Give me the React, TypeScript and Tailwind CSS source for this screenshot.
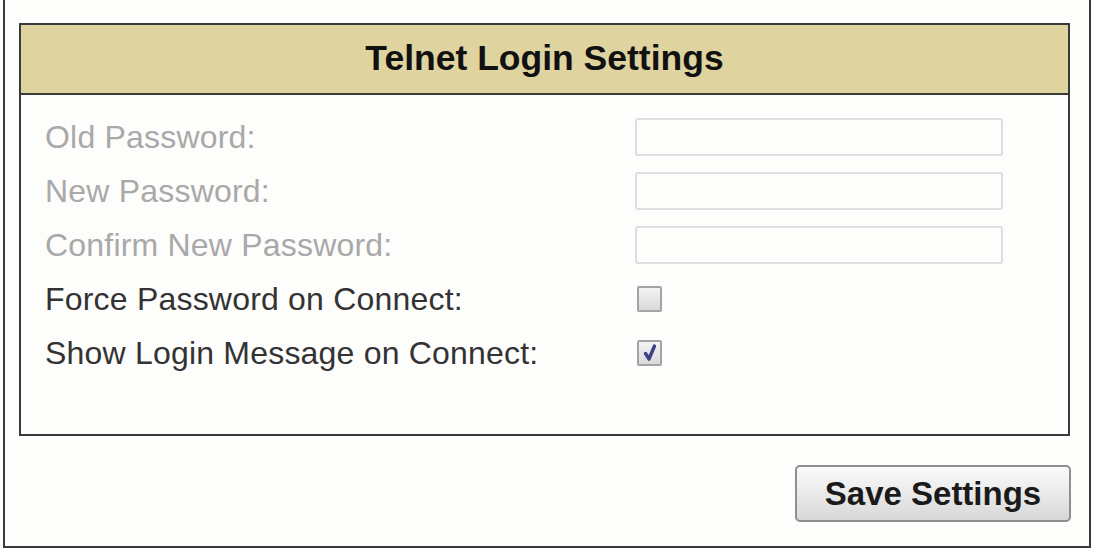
const font = { fontFamily: '"Liberation Sans", Arial, sans-serif' };

function TextRow({ label }: { label: string }) {
  return (
    <div className="flex items-center h-[38px]">
      <span className="w-[590px] text-[32px] tracking-[0.2px] text-[#a9a9a9] leading-none">{label}</span>
      <input
        type="text"
        disabled
        className="w-[368px] h-[38px] border-2 border-[#dedede] rounded-[3px] bg-[#fdfdfc]"
      />
    </div>
  );
}

function CheckRow({ label, checked }: { label: string; checked: boolean }) {
  return (
    <div className="flex items-center h-[38px]">
      <span className="w-[592px] text-[32px] tracking-[0.2px] text-[#333333] leading-none">{label}</span>
      <span className="w-[25px] h-[26px] border-2 border-[#a3a3a3] rounded-[2px] bg-gradient-to-b from-[#f4f4f4] to-[#d9d9d9] flex items-center justify-center">
        {checked && (
          <svg viewBox="0 0 20 20" className="w-[20px] h-[20px]">
            <path d="M5.5 10.5 L9 16 L14.5 3" fill="none" stroke="#40408a" strokeWidth="3.4" strokeLinecap="round" strokeLinejoin="round" />
          </svg>
        )}
      </span>
    </div>
  );
}

export default function App() {
  return (
    <div className="w-[1093px] h-[548px] bg-[#fdfdfb] overflow-hidden" style={font}>
      <div className="ml-[3px] w-[1088px] h-[548px] border-x-2 border-b-2 border-[#3a3a3a] pl-[14px] pr-[19px] pt-[23px] flex flex-col">
        <div className="border-2 border-[#3a3a3a] bg-[#fdfdfb]">
          <div className="h-[70px] bg-[#dfd3a0] border-b-2 border-[#3a3a3a] flex items-center justify-center">
            <span className="text-[35.5px] font-bold text-[#111111] leading-none">Telnet Login Settings</span>
          </div>
          <div className="pl-[24px] pt-[23px] pb-[62px] flex flex-col gap-[16px]">
            <TextRow label="Old Password:" />
            <TextRow label="New Password:" />
            <TextRow label="Confirm New Password:" />
            <CheckRow label="Force Password on Connect:" checked={false} />
            <CheckRow label="Show Login Message on Connect:" checked={true} />
          </div>
        </div>
        <div className="flex justify-end mt-[29px]">
          <button className="w-[276px] h-[57px] border-2 border-[#8f8f8f] rounded-[5px] bg-gradient-to-b from-[#fbfbfb] to-[#d8d8d8] text-[33px] font-bold text-[#1a1a1a] leading-none mr-[-1px]">
            Save Settings
          </button>
        </div>
      </div>
    </div>
  );
}
